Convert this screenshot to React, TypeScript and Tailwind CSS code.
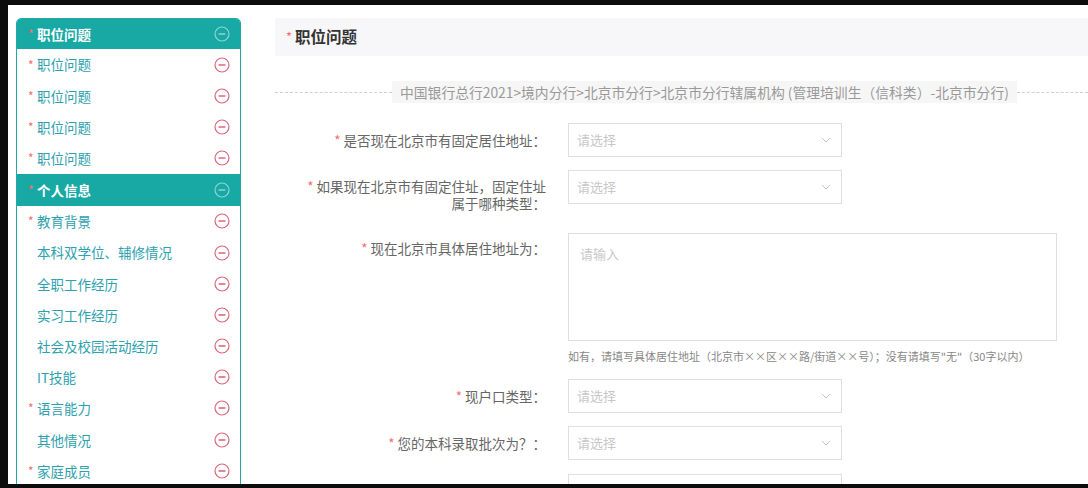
import React from 'react';

interface NavItem {
  label: string;
  required?: boolean;
  group?: boolean;
}

const NAV_ITEMS: NavItem[] = [
  { label: '职位问题', required: true, group: true },
  { label: '职位问题', required: true },
  { label: '职位问题', required: true },
  { label: '职位问题', required: true },
  { label: '职位问题', required: true },
  { label: '个人信息', required: true, group: true },
  { label: '教育背景', required: true },
  { label: '本科双学位、辅修情况' },
  { label: '全职工作经历' },
  { label: '实习工作经历' },
  { label: '社会及校园活动经历' },
  { label: 'IT技能' },
  { label: '语言能力', required: true },
  { label: '其他情况' },
  { label: '家庭成员', required: true },
];

function MinusCircle({ light }: { light?: boolean }) {
  const color = light ? 'rgba(255,255,255,0.5)' : '#d9677a';
  return (
    <svg width="16" height="16" viewBox="0 0 16 16" fill="none">
      <circle cx="8" cy="8" r="7" stroke={color} strokeWidth="1.2" />
      <line x1="4.6" y1="8" x2="11.4" y2="8" stroke={color} strokeWidth="1.6" />
    </svg>
  );
}

function Chevron() {
  return (
    <svg width="10" height="6" viewBox="0 0 10 6" fill="none">
      <path d="M1 1l4 4 4-4" stroke="#c0c4cc" strokeWidth="1" />
    </svg>
  );
}

function Select() {
  return (
    <div className="w-[274px] h-[34px] border border-[#dcdfe6] bg-white flex items-center justify-between pl-[8px] pr-[10px]">
      <span className="text-[13px] text-[#c8c8c8]">请选择</span>
      <Chevron />
    </div>
  );
}

function Label({ children }: { children?: React.ReactNode }) {
  return (
    <div className="w-[273px] shrink-0 text-right text-[13.5px] text-[#666] leading-[17px] pr-[2px]">
      {children && <span className="text-[#f56c6c] mr-[3px]">*</span>}
      {children}
    </div>
  );
}

export default function App() {
  return (
    <div className="w-[1088px] h-[488px] bg-[#0c0c0c] pt-[5px] pl-[8px] pb-[4px] font-['Noto_Sans_CJK_SC','Noto_Sans',sans-serif] overflow-hidden">
      <div className="h-full bg-white flex overflow-hidden">
        {/* Sidebar */}
        <div className="pl-[8px] pt-[13px] shrink-0">
          <div className="w-[225px] border border-[#22aaa7] rounded-t-[5px] overflow-hidden">
            {NAV_ITEMS.map((item, i) => (
              <div
                key={i}
                className={`flex items-center justify-between pl-[11px] pr-[10px] ${
                  item.group
                    ? i === 0
                      ? 'bg-[#19a9a5] h-[30px]'
                      : 'bg-[#19a9a5] h-[32px]'
                    : 'bg-white h-[31.2px]'
                }`}
              >
                <div className="flex items-center">
                  <span className="w-[9px] text-[#f56c6c] text-[12px] leading-none">
                    {item.required ? '*' : ''}
                  </span>
                  <span
                    className={`text-[13.5px] ${
                      item.group ? 'text-white font-bold' : 'text-[#2ea1ae]'
                    }`}
                  >
                    {item.label}
                  </span>
                </div>
                <MinusCircle light={item.group} />
              </div>
            ))}
          </div>
        </div>

        {/* Main */}
        <div className="flex-1 pl-[34px] pt-[13px] min-w-0">
          <div className="h-[38px] bg-[#f7f7f9] flex items-center pl-[11px]">
            <span className="text-[#f56c6c] text-[13px] mr-[3px]">*</span>
            <span className="text-[15.5px] font-bold text-[#333]">职位问题</span>
          </div>

          <div className="flex items-center mt-[25px] h-[22px]">
            <div className="w-[117px] border-t border-dashed border-[#d0d0d0]" />
            <div className="bg-[#f6f6f6] h-[22px] flex items-center px-[8px] text-[13.8px] text-[#999] whitespace-nowrap">
              中国银行总行2021&gt;境内分行&gt;北京市分行&gt;北京市分行辖属机构 (管理培训生（信科类）-北京市分行)
            </div>
            <div className="flex-1 border-t border-dashed border-[#d0d0d0]" />
          </div>

          <div className="flex flex-col mt-[20px]">
            <div className="flex items-center">
              <Label>是否现在北京市有固定居住地址：</Label>
              <div className="ml-[20px]">
                <Select />
              </div>
            </div>

            <div className="flex items-start mt-[13px]">
              <div className="pt-[8px]">
                <Label>
                  如果现在北京市有固定住址，固定住址
                  <br />
                  属于哪种类型：
                </Label>
              </div>
              <div className="ml-[20px]">
                <Select />
              </div>
            </div>

            <div className="flex items-start mt-[21px]">
              <div className="pt-[7px]">
                <Label>现在北京市具体居住地址为：</Label>
              </div>
              <div className="ml-[20px]">
                <div className="w-[489px] h-[108px] border border-[#dcdfe6] px-[11px] pt-[10px] text-[13px] text-[#c8c8c8]">
                  请输入
                </div>
                <div className="mt-[7px] text-[11px] text-[#888] leading-[16px] whitespace-nowrap">
                  如有，请填写具体居住地址（北京市××区××路/街道××号）；没有请填写"无"（30字以内）
                </div>
              </div>
            </div>

            <div className="flex items-center mt-[15px]">
              <Label>现户口类型：</Label>
              <div className="ml-[20px]">
                <Select />
              </div>
            </div>

            <div className="flex items-center mt-[13px]">
              <Label>您的本科录取批次为？：</Label>
              <div className="ml-[20px]">
                <Select />
              </div>
            </div>

            <div className="flex items-start mt-[14px]">
              <Label />
              <div className="ml-[20px] w-[274px] h-[34px] border border-[#dcdfe6] bg-white" />
            </div>
          </div>
        </div>
      </div>
    </div>
  );
}
